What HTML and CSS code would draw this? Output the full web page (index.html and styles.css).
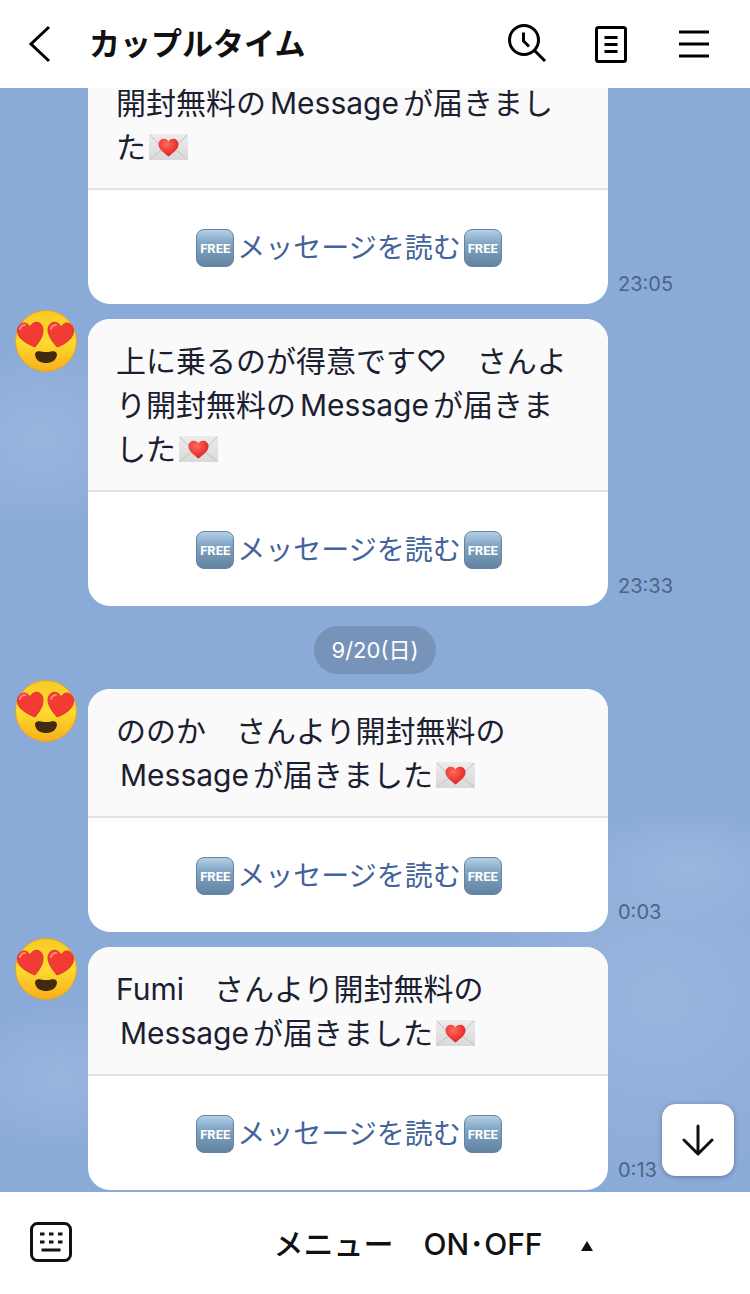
FILE: index.html
```html
<!DOCTYPE html>
<html lang="ja">
<head>
    <meta charset="UTF-8">
    <meta name="viewport" content="width=device-width, initial-scale=1.0">
    <title>カップルタイム</title>
    <link rel="stylesheet" href="styles.css">
</head>
<body>
    <!-- shared drawings -->
    <svg class="sprite" aria-hidden="true">
        <defs>
            <linearGradient id="face-fill" x1="0" y1="0" x2="0" y2="1">
                <stop offset="0" stop-color="#f9c926"/>
                <stop offset="0.5" stop-color="#fddb2e"/>
                <stop offset="1" stop-color="#f7ae1c"/>
            </linearGradient>
            <linearGradient id="paper-fill" x1="0" y1="0" x2="0" y2="1">
                <stop offset="0" stop-color="#ececec"/>
                <stop offset="1" stop-color="#d9d9d9"/>
            </linearGradient>
            <radialGradient id="heart-fill" cx="0.4" cy="0.3" r="0.7">
                <stop offset="0" stop-color="#ff6a5c"/>
                <stop offset="1" stop-color="#e2201f"/>
            </radialGradient>
        </defs>
        <symbol id="face" viewBox="0 0 62 62">
            <circle cx="31" cy="31" r="30.5" fill="url(#face-fill)" stroke="#e8a32a"/>
            <path d="M20 37 C8 32 2 27 2.500 20 C3 13 11 10 15 17 C19 9 28 12 28 20 C28 27 24 32 20 37Z" fill="#f23b34" stroke="#d9392c"/>
            <path d="M42 37 C38 32 33 26 33 20 C33 12 42 9 46 17 C50 10 58 13 58.500 20 C59 27 53 33 42 37Z" fill="#f23b34" stroke="#d9392c"/>
            <path d="M5 19 Q6 15 10 15M36 19 Q37 15 41 15" fill="none" stroke="#ff8a7c" stroke-width="2" stroke-linecap="round"/>
            <path d="M20 45 C20 41 23 41 26 41.500 Q31 42.500 36 41.500 C39 41 42 41 42 45 C41 51 36 53 31 53 C26 53 21 51 20 45Z" fill="#422b0d"/>
        </symbol>
        <symbol id="letter" viewBox="0 0 39 26">
            <rect width="39" height="26" fill="url(#paper-fill)"/>
            <path d="M1 1 L19.500 20 L38 1M1 25 L15 14M38 25 L24 14" fill="none" stroke="#bfc2c4" stroke-width="1"/>
            <path d="M19.500 22.500 C14 18 9.500 15 9.500 10.500 C9.500 4 17.500 3 19.500 7.500 C21.500 3 29.500 4 29.500 10.500 C29.500 15 25 18 19.500 22.500Z" fill="url(#heart-fill)"/>
        </symbol>
    </svg>

    <header class="header">
        <button class="icon-button" aria-label="戻る">
            <svg width="24" height="40" viewBox="0 0 24 40"><path d="M21 3 L3 20 L21 37" fill="none" stroke="currentColor" stroke-width="3"/></svg>
        </button>
        <h1 class="title">カップルタイム</h1>
        <nav class="actions">
            <button class="icon-button" aria-label="検索">
                <svg width="40" height="40" viewBox="0 0 40 40" fill="none" stroke="currentColor" stroke-width="3">
                    <circle cx="16" cy="16" r="14.500"/>
                    <path d="M15.500 8.500 V17 L21 22.500M26 26 L37 37"/>
                </svg>
            </button>
            <button class="icon-button" aria-label="ノート">
                <svg width="34" height="38" viewBox="0 0 34 38" fill="none" stroke="currentColor" stroke-width="3">
                    <rect x="2.500" y="2.500" width="29" height="34" rx="2"/>
                    <path d="M10.500 12.500 H23.500M10.500 19.500 H23.500M10.500 26.500 H23.500"/>
                </svg>
            </button>
            <button class="icon-button" aria-label="メニュー">
                <svg width="30" height="30" viewBox="0 0 30 30" stroke="currentColor" stroke-width="3"><path d="M0 3 H30M0 15 H30M0 27 H30"/></svg>
            </button>
        </nav>
    </header>

    <main class="chat">
        <div class="message">
            <div class="avatar"></div>
            <div class="card">
                <p class="card-text">開封無料の<span class="latin">Message</span>が届きまし<br>た<svg class="letter"><use href="#letter"/></svg></p>
                <a class="card-link" href="#"><span class="free">FREE</span>メッセージを読む<span class="free">FREE</span></a>
            </div>
            <time class="time">23:05</time>
        </div>

        <div class="message">
            <div class="avatar"><svg class="face"><use href="#face"/></svg></div>
            <div class="card">
                <p class="card-text">上に乗るのが得意です♡　さんよ<br>り開封無料の<span class="latin">Message</span>が届きま<br>した<svg class="letter"><use href="#letter"/></svg></p>
                <a class="card-link" href="#"><span class="free">FREE</span>メッセージを読む<span class="free">FREE</span></a>
            </div>
            <time class="time">23:33</time>
        </div>

        <div class="date">9/20(日)</div>

        <div class="message">
            <div class="avatar"><svg class="face"><use href="#face"/></svg></div>
            <div class="card">
                <p class="card-text">ののか　さんより開封無料の<br><span class="latin">Message</span>が届きました<svg class="letter"><use href="#letter"/></svg></p>
                <a class="card-link" href="#"><span class="free">FREE</span>メッセージを読む<span class="free">FREE</span></a>
            </div>
            <time class="time">0:03</time>
        </div>

        <div class="message">
            <div class="avatar"><svg class="face"><use href="#face"/></svg></div>
            <div class="card">
                <p class="card-text">Fumi　さんより開封無料の<br><span class="latin">Message</span>が届きました<svg class="letter"><use href="#letter"/></svg></p>
                <a class="card-link" href="#"><span class="free">FREE</span>メッセージを読む<span class="free">FREE</span></a>
            </div>
            <time class="time">0:13</time>
        </div>

        <button class="scroll-down" aria-label="最新のメッセージへ">
            <svg width="32" height="32" viewBox="0 0 32 32" fill="none" stroke="currentColor" stroke-width="3" stroke-linecap="round" stroke-linejoin="round"><path d="M16 2 V30M2 16 L16 30 L30 16"/></svg>
        </button>
    </main>

    <footer class="footer">
        <button class="icon-button keyboard" aria-label="キーボード">
            <svg width="42" height="40" viewBox="0 0 42 40" fill="none" stroke="currentColor" stroke-width="3">
                <rect x="1.500" y="1.500" width="39" height="37" rx="6"/>
                <path d="M10 12 H14.500M19 12 H23.500M28 12 H32.500M10 20 H14.500M19 20 H23.500M28 20 H32.500M11.500 28 H30.500"/>
            </svg>
        </button>
        <button class="menu-toggle">
            <span>メニュー　ON･OFF</span>
            <svg width="12" height="18" viewBox="0 0 12 18" fill="currentColor"><path d="M6 8 L12 18 H0Z"/></svg>
        </button>
    </footer>
</body>
</html>
```
FILE: styles.css
```css
:root {
    --ink: #111111;
    --text: #1b2031;
    --link: #42639a;
    --sky: #8aaad7;
    --cloud: rgba(158, 184, 224, 0.8);
    --cloud-none: rgba(158, 184, 224, 0);
    --time: #4b6585;
}

* {
    margin: 0;
    padding: 0;
    box-sizing: border-box;
}

body {
    font-family: Inter, "Noto Sans CJK JP", sans-serif;
    color: var(--ink);
    background: #fff;
    height: 100vh;
    display: flex;
    flex-direction: column;
}

button {
    font: inherit;
    color: inherit;
    background: none;
    border: none;
    cursor: pointer;
}

svg {
    flex-shrink: 0;
}

.sprite {
    position: absolute;
    width: 0;
    height: 0;
}

.icon-button {
    display: flex;
    align-items: center;
    justify-content: center;
    color: #000;
}

/* Header */
.header {
    display: flex;
    align-items: center;
    height: 88px;
    flex-shrink: 0;
    padding: 0 36px 0 28px;
}

.title {
    flex: 1;
    margin-left: 37px;
    font-size: 31px;
    line-height: 44px;
    font-weight: 700;
}

.actions {
    display: flex;
    align-items: center;
    gap: 43px;
}

.actions .icon-button {
    width: 40px;
}

/* Chat */
.chat {
    position: relative;
    flex: 1;
    min-height: 0;
    overflow: hidden;
    display: flex;
    flex-direction: column;
    justify-content: flex-end;
    gap: 15px;
    padding-bottom: 2px;
    background:
        radial-gradient(120px 100px at 40px 350px, var(--cloud), var(--cloud-none)),
        radial-gradient(120px 80px at 60px 990px, var(--cloud), var(--cloud-none)),
        radial-gradient(110px 60px at 92% 780px, var(--cloud), var(--cloud-none)),
        radial-gradient(220px 200px at 88% 910px, var(--cloud), var(--cloud-none)),
        var(--sky);
}

.message {
    display: flex;
    flex-shrink: 0;
    align-items: flex-end;
}

.avatar {
    width: 88px;
    flex-shrink: 0;
    align-self: flex-start;
    margin-top: -9px;
    padding-left: 15px;
}

.face {
    display: block;
    width: 62px;
    height: 62px;
}

.card {
    flex: 0 1 520px;
    border-radius: 22px;
    overflow: hidden;
    background: #fff;
}

.card-text {
    padding: 20px 28px 19px;
    background: #fafafa;
    border-bottom: 2px solid #e3e3e4;
    color: var(--text);
    font-size: 30px;
    line-height: 44px;
}

.latin {
    margin: 0 4px;
}

.letter {
    width: 39px;
    height: 26px;
    margin-left: 3px;
    vertical-align: -2px;
}

.card-link {
    display: flex;
    align-items: center;
    justify-content: center;
    gap: 3px;
    height: 114px;
    padding: 2px 0 0 2px;
    color: var(--link);
    font-size: 28px;
    line-height: 40px;
    text-decoration: none;
}

.free {
    width: 38px;
    height: 38px;
    border: 1px solid #6484a1;
    border-radius: 8px;
    background: linear-gradient(#b4d0e7, #83a6c5 35%, #6283a1);
    color: #fff;
    font-family: Roboto, sans-serif;
    font-size: 13px;
    font-weight: 700;
    line-height: 37px;
    text-align: center;
}

.time {
    padding: 0 0 8px 10px;
    color: var(--time);
    font-size: 20px;
    line-height: 24px;
}

.date {
    align-self: center;
    flex-shrink: 0;
    margin-top: 5px;
    padding: 0 18px;
    border-radius: 24px;
    background: #7793ba;
    color: #fff;
    font-size: 22px;
    line-height: 48px;
}

.scroll-down {
    position: absolute;
    right: 16px;
    bottom: 16px;
    width: 72px;
    height: 72px;
    display: flex;
    align-items: center;
    justify-content: center;
    border-radius: 14px;
    background: #fff;
    box-shadow: 0 1px 5px rgba(0, 0, 0, 0.3);
}

/* Footer */
.footer {
    display: flex;
    height: 102px;
    flex-shrink: 0;
    padding-bottom: 3px;
}

.keyboard {
    width: 116px;
    padding-right: 14px;
    color: var(--ink);
}

.menu-toggle {
    flex: 1;
    display: flex;
    align-items: center;
    justify-content: center;
    gap: 38px;
    font-size: 30px;
    font-weight: 500;
}
```
